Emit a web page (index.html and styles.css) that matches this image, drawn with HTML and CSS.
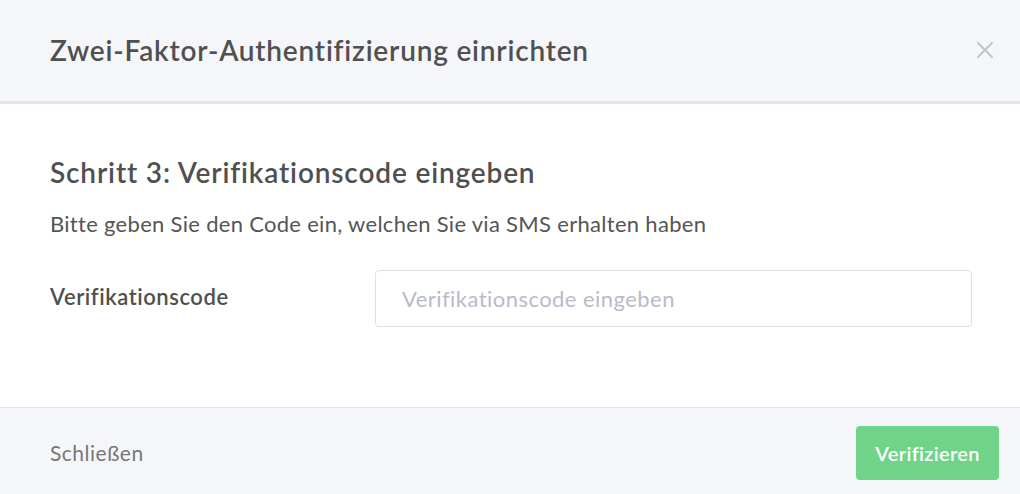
FILE: index.html
```html
<!DOCTYPE html>
<html lang="de">
<head>
<meta charset="utf-8">
<title>Zwei-Faktor-Authentifizierung</title>
<link rel="stylesheet" href="styles.css">
</head>
<body>
<div class="modal">
  <header class="modal-header">
    <h1 class="modal-title">Zwei-Faktor-Authentifizierung einrichten</h1>
    <button class="close" aria-label="Schließen">
      <svg width="18" height="18" viewBox="0 0 18 18"><path d="M2 2 L16 16 M16 2 L2 16" stroke="#c4c5c9" stroke-width="2" fill="none" stroke-linecap="round"/></svg>
    </button>
  </header>
  <section class="modal-body">
    <h2 class="step-title">Schritt 3: Verifikationscode eingeben</h2>
    <p class="step-text">Bitte geben Sie den Code ein, welchen Sie via SMS erhalten haben</p>
    <div class="form-row">
      <label class="form-label" for="code">Verifikationscode</label>
      <input class="form-input" id="code" type="text" placeholder="Verifikationscode eingeben">
    </div>
  </section>
  <footer class="modal-footer">
    <button class="btn-link">Schließen</button>
    <button class="btn-primary">Verifizieren</button>
  </footer>
</div>
</body>
</html>
```

FILE: styles.css
```css
* { box-sizing: border-box; }
html, body { margin: 0; padding: 0; }
body {
  font-family: Lato, "Open Sans", sans-serif;
  color: #545454;
  background: #ffffff;
}
.modal {
  width: 1020px;
  height: 494px;
  display: flex;
  flex-direction: column;
}
.modal-header {
  height: 104px;
  flex: none;
  background: #f5f6fa;
  border-bottom: 3px solid #e4e5e9;
  display: flex;
  align-items: center;
  justify-content: space-between;
  padding: 0 26px 2px 50px;
}
.modal-title {
  margin: 0;
  font-size: 28px;
  letter-spacing: 0.8px;
  font-weight: 600;
  color: #505050;
}
.close {
  border: 0;
  background: none;
  padding: 0;
  width: 18px;
  height: 18px;
  display: flex;
}
.modal-body {
  flex: 1;
  padding: 52px 48px 0 50px;
  background: #fff;
}
.step-title {
  margin: 0;
  font-size: 28px;
  letter-spacing: 0.85px;
  font-weight: 600;
  color: #505050;
  line-height: 32px;
}
.step-text {
  margin: 23px 0 0;
  font-size: 22px;
  letter-spacing: 0.3px;
  line-height: 26px;
  color: #555;
}
.form-row {
  display: flex;
  align-items: center;
  margin-top: 33px;
}
.form-label {
  width: 325px;
  flex: none;
  font-size: 22px;
  letter-spacing: 0.55px;
  font-weight: 600;
  color: #4f4f4f;
  padding-bottom: 4px;
}
.form-input {
  flex: 1;
  height: 57px;
  border: 1px solid #dbe2e6;
  border-radius: 4px;
  padding: 0 26px;
  font-family: inherit;
  font-size: 22px;
  letter-spacing: 0.45px;
  color: #555;
  outline: none;
}
.form-input::placeholder { color: #b7bbc9; }
.modal-footer {
  height: 87px;
  flex: none;
  background: #f5f6fa;
  border-top: 1px solid #e3e4e8;
  display: flex;
  align-items: center;
  justify-content: space-between;
  padding: 4px 21px 0 50px;
}
.btn-link {
  border: 0;
  background: none;
  padding: 0 0 2px;
  font-family: inherit;
  font-size: 21px;
  letter-spacing: 0.5px;
  color: #777;
}
.btn-primary {
  border: 0;
  background: #6fd48a;
  color: #fff;
  border-radius: 4px;
  height: 54px;
  width: 143px;
  font-family: inherit;
  font-size: 20px;
  letter-spacing: 0.3px;
  font-weight: 600;
}
```
